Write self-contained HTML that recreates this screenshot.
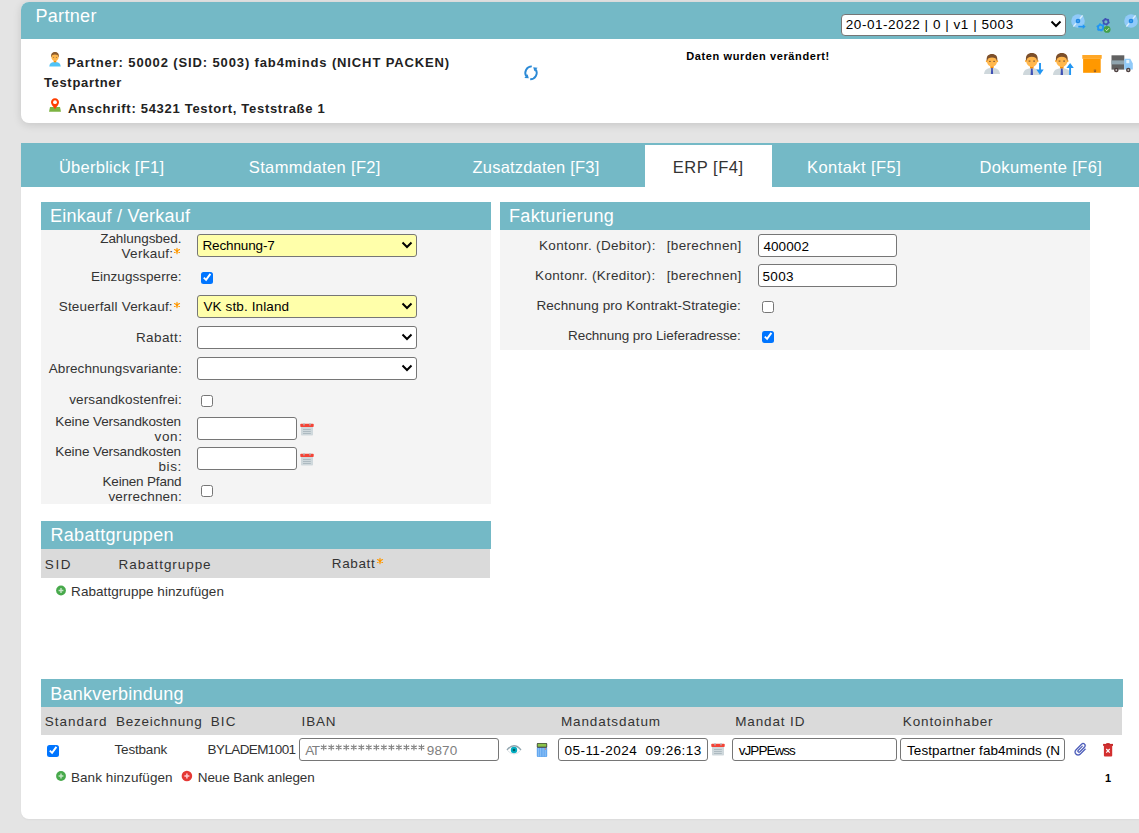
<!DOCTYPE html>
<html><head><meta charset="utf-8"><style>
html,body{margin:0;padding:0;}
body{width:1139px;height:833px;overflow:hidden;position:relative;background:#e4e4e4;font-family:"Liberation Sans", sans-serif;}
.a{position:absolute;box-sizing:border-box;}
.t{position:absolute;white-space:pre;line-height:normal;font-family:"Liberation Sans", sans-serif;}
.teal{background:#74b9c6;}
.sec{background:#f4f4f4;}
.gr{background:#dadada;}
.inp{position:absolute;box-sizing:border-box;background:#fff;border:1px solid #767676;border-radius:3px;}
.cb{position:absolute;box-sizing:border-box;width:12px;height:12px;border-radius:2.5px;}
.cb.off{border:1px solid #767676;background:#fff;}
.cb.on{background:#0075ff;}
</style></head><body>
<!-- Partner panel -->
<div class="a" style="left:21px;top:2px;width:1140px;height:121px;background:#fff;border-radius:8px;box-shadow:0 2px 9px rgba(0,0,0,0.13);overflow:hidden">
  <div class="a teal" style="left:0;top:0;width:1140px;height:37px"></div>
</div>
<!-- top select -->
<div class="inp" style="left:841px;top:14px;width:225px;height:22px;border-radius:4px"></div>

<!-- Tabs + content panel -->
<div class="a" style="left:21px;top:143px;width:1140px;height:676px;background:#fff;border-radius:0 0 8px 8px;box-shadow:0 1px 2px rgba(0,0,0,0.04)">
  <div class="a teal" style="left:0;top:0;width:1140px;height:44px"></div>
  <div class="a" style="left:624px;top:2px;width:127px;height:42px;background:#fff"></div>
</div>

<!-- Einkauf / Verkauf -->
<div class="a teal" style="left:41px;top:202px;width:450px;height:28px"></div>
<div class="a sec" style="left:41px;top:230px;width:450px;height:274px"></div>
<!-- Fakturierung -->
<div class="a teal" style="left:500px;top:202px;width:590px;height:28px"></div>
<div class="a sec" style="left:500px;top:230px;width:590px;height:120px"></div>
<!-- Rabattgruppen -->
<div class="a teal" style="left:41px;top:521px;width:450px;height:28px"></div>
<div class="a gr" style="left:41px;top:549px;width:449px;height:29px"></div>
<!-- Bankverbindung -->
<div class="a teal" style="left:41px;top:679px;width:1082px;height:28px"></div>
<div class="a gr" style="left:41px;top:707px;width:1081px;height:28px"></div>

<!-- Left form controls -->
<div class="inp" style="left:197px;top:234px;width:220px;height:23px;background:#ffffaa"></div>
<div class="cb on" style="left:201px;top:272px"><svg width="13" height="13" viewBox="0 0 13 13" style="position:absolute;left:-0.4px;top:-1px"><path d="M2.8 6.6 L5.1 8.9 L9.4 2.9" stroke="#fff" stroke-width="1.9" fill="none"/></svg></div>
<div class="inp" style="left:197px;top:295px;width:220px;height:23px;background:#ffffaa"></div>
<div class="inp" style="left:197px;top:326px;width:220px;height:23px"></div>
<div class="inp" style="left:197px;top:357px;width:220px;height:23px"></div>
<div class="cb off" style="left:201px;top:395px"></div>
<div class="inp" style="left:197px;top:417px;width:100px;height:23px"></div>
<div class="inp" style="left:197px;top:447px;width:100px;height:23px"></div>
<div class="cb off" style="left:201px;top:485px"></div>

<!-- Fakturierung controls -->
<div class="inp" style="left:758px;top:234px;width:139px;height:23px"></div>
<div class="inp" style="left:758px;top:264px;width:139px;height:23px"></div>
<div class="cb off" style="left:762px;top:301px"></div>
<div class="cb on" style="left:762px;top:331px"><svg width="13" height="13" viewBox="0 0 13 13" style="position:absolute;left:-0.4px;top:-1px"><path d="M2.8 6.6 L5.1 8.9 L9.4 2.9" stroke="#fff" stroke-width="1.9" fill="none"/></svg></div>

<!-- Bank row -->
<div class="cb on" style="left:47px;top:745px"><svg width="13" height="13" viewBox="0 0 13 13" style="position:absolute;left:-0.4px;top:-1px"><path d="M2.8 6.6 L5.1 8.9 L9.4 2.9" stroke="#fff" stroke-width="1.9" fill="none"/></svg></div>
<div class="inp" style="left:299px;top:738px;width:200px;height:23px"></div>
<div class="inp" style="left:558px;top:738px;width:150px;height:23px"></div>
<div class="inp" style="left:732px;top:738px;width:165px;height:23px"></div>
<div class="inp" style="left:900px;top:738px;width:165px;height:23px"></div>

<!-- header icons -->
<svg class="a" style="left:1064px;top:8px" width="75" height="30" viewBox="1064 8 75 30">
  <circle cx="1078" cy="21" r="6.8" fill="#90caf9"/>
  <path d="M1082.6 15.4 L1080 18.6 M1076 23.4 L1073.4 26.6" stroke="#dbeefc" stroke-width="1.5"/>
  <circle cx="1078" cy="21" r="2.3" fill="#1e88e5"/>
  <circle cx="1078" cy="21" r="0.8" fill="#64b5f6"/>
  <path d="M1078.3 26.6 H1083.3" stroke="#2196f3" stroke-width="1.6"/>
  <path d="M1082.8 24.2 L1085.6 26.6 L1082.8 29 Z" fill="#2196f3"/>
  <circle cx="1105.9" cy="21.8" r="2.4" fill="none" stroke="#3f51b5" stroke-width="1.6"/>
  <circle cx="1105.9" cy="21.8" r="3.2" fill="none" stroke="#3f51b5" stroke-width="1.3" stroke-dasharray="1.508 1.843"/>
  <circle cx="1100.6" cy="27.4" r="2.6" fill="none" stroke="#2196f3" stroke-width="1.8"/>
  <circle cx="1100.6" cy="27.4" r="3.5" fill="none" stroke="#2196f3" stroke-width="1.4" stroke-dasharray="1.649 2.016"/>
  <circle cx="1107.1" cy="29.4" r="3.4" fill="#43a047"/>
  <path d="M1105.4 29.5 L1106.7 30.7 L1109 28.2" stroke="#dcedc8" stroke-width="1" fill="none"/>
  <circle cx="1131" cy="21" r="6.8" fill="#90caf9"/>
  <path d="M1135.6 15.4 L1133 18.6 M1129 23.4 L1126.4 26.6" stroke="#dbeefc" stroke-width="1.5"/>
  <circle cx="1131" cy="21" r="2.3" fill="#1e88e5"/>
  <circle cx="1131" cy="21" r="0.8" fill="#64b5f6"/>
</svg>
<!-- top select chevron -->
<svg class="a" style="left:1050px;top:20px" width="12" height="8" viewBox="0 0 12 8"><path d="M1.5 1.5 L6 6 L10.5 1.5" stroke="#000" stroke-width="2" fill="none"/></svg>

<!-- partner small person -->
<svg class="a" style="left:44px;top:48px" width="20" height="22" viewBox="0 0 20 22">
<g transform="translate(5.24 4.00) scale(0.72)">
  <path d="M0 20 C0.3 15.8 3 13.9 8 13.9 C13 13.9 15.7 15.8 16 20 Z" fill="#4fc3f7"/>
  <rect x="6.2" y="10.5" width="3.6" height="3.8" fill="#fb8c00"/>
  <path d="M3 5.2 C3 1.7 5 1 8 1 C11 1 13 1.7 13 5.2 L13 7.7 C13 10.2 10.5 12.7 8 12.7 C5.5 12.7 3 10.2 3 7.7 Z" fill="#ffb74d"/>
  <path d="M2.7 6.8 C2.2 2 4.5 0 8 0 C11.5 0 13.8 2 13.3 6.8 L12.7 6.8 C12.5 4.6 11 3.5 8 3.5 C5 3.5 3.5 4.6 3.3 6.8 Z" fill="#8a5a2e"/>
  <rect x="5.1" y="6.9" width="1.6" height="1" fill="#8d6e47"/><rect x="9.3" y="6.9" width="1.6" height="1" fill="#8d6e47"/>
</g>
</svg>
<!-- map pin -->
<svg class="a" style="left:48px;top:97px" width="14" height="16" viewBox="48 97 14 16">
  <path d="M50 106.9 H60 L61 111.7 H49 Z" fill="#7cb342"/>
  <path d="M55 98.2 C57.4 98.2 59 100 59 102.2 C59 104.6 56.5 106.5 55 109.2 C53.5 106.5 51 104.6 51 102.2 C51 100 52.6 98.2 55 98.2 Z" fill="#ff3d00"/>
  <circle cx="55" cy="102.2" r="1.9" fill="#fff"/>
</svg>
<!-- sync -->
<svg class="a" style="left:520px;top:62px" width="22" height="22" viewBox="520 62 22 22">
  <path d="M531.8 66.4 A6.4 6.4 0 0 0 526.3 76.2" stroke="#2b8ad6" stroke-width="1.9" fill="none"/>
  <path d="M524.4 77.9 L528.8 78.3 L527.6 74.3 Z" fill="#2b8ad6"/>
  <path d="M530.2 79.3 A6.4 6.4 0 0 0 535.7 69.5" stroke="#2b8ad6" stroke-width="1.9" fill="none"/>
  <path d="M537.6 67.7 L533.2 67.3 L534.4 71.3 Z" fill="#2b8ad6"/>
</svg>

<!-- persons right -->
<svg class="a" style="left:982px;top:51.8px;overflow:visible" width="23" height="26" viewBox="0 0 23 26">
<g transform="translate(2 2) scale(1.0)">
  <path d="M0 20 C0.3 15.8 3 13.9 8 13.9 C13 13.9 15.7 15.8 16 20 Z" fill="#cfd8dc"/>
  <rect x="6.4" y="10.5" width="3.2" height="3.6" fill="#fb8c00"/>
  <circle cx="2.8" cy="7.3" r="1" fill="#ffa726"/><circle cx="13.2" cy="7.3" r="1" fill="#ffa726"/>
  <path d="M3 5.2 C3 1.7 5 1 8 1 C11 1 13 1.7 13 5.2 L13 7.7 C13 10.2 10.5 12.7 8 12.7 C5.5 12.7 3 10.2 3 7.7 Z" fill="#ffb74d"/>
  <path d="M2.7 6.8 C2.2 2 4.5 0 8 0 C11.5 0 13.8 2 13.3 6.8 L12.7 6.8 C12.5 4.6 11 3.5 8 3.5 C5 3.5 3.5 4.6 3.3 6.8 Z" fill="#7b4f2c"/>
  <rect x="5.1" y="6.9" width="1.6" height="0.9" fill="#6d4c2f"/><rect x="9.3" y="6.9" width="1.6" height="0.9" fill="#6d4c2f"/>
  <path d="M7.2 14 H8.8 L9.1 20 H6.9 Z" fill="#3f51b5"/>
</g>
</svg>
<svg class="a" style="left:1021.1000000000001px;top:50.9px;overflow:visible" width="24" height="28" viewBox="0 0 24 28">
<g transform="translate(2 2) scale(1.1)">
  <path d="M0 20 C0.3 15.8 3 13.9 8 13.9 C13 13.9 15.7 15.8 16 20 Z" fill="#cfd8dc"/>
  <rect x="6.4" y="10.5" width="3.2" height="3.6" fill="#fb8c00"/>
  <circle cx="2.8" cy="7.3" r="1" fill="#ffa726"/><circle cx="13.2" cy="7.3" r="1" fill="#ffa726"/>
  <path d="M3 5.2 C3 1.7 5 1 8 1 C11 1 13 1.7 13 5.2 L13 7.7 C13 10.2 10.5 12.7 8 12.7 C5.5 12.7 3 10.2 3 7.7 Z" fill="#ffb74d"/>
  <path d="M2.7 6.8 C2.2 2 4.5 0 8 0 C11.5 0 13.8 2 13.3 6.8 L12.7 6.8 C12.5 4.6 11 3.5 8 3.5 C5 3.5 3.5 4.6 3.3 6.8 Z" fill="#7b4f2c"/>
  <rect x="5.1" y="6.9" width="1.6" height="0.9" fill="#6d4c2f"/><rect x="9.3" y="6.9" width="1.6" height="0.9" fill="#6d4c2f"/>
  <path d="M7.2 14 H8.8 L9.1 20 H6.9 Z" fill="#3f51b5"/>
</g><path transform="translate(-1021.1000000000001 -50.9)" d="M1039.15 62.8 h1.9 v6.7 h2.75 l-3.7 5.2 l-3.7 -5.2 h2.75z" fill="#2196f3"/>
</svg>
<svg class="a" style="left:1051.1000000000001px;top:50.9px;overflow:visible" width="24" height="28" viewBox="0 0 24 28">
<g transform="translate(2 2) scale(1.1)">
  <path d="M0 20 C0.3 15.8 3 13.9 8 13.9 C13 13.9 15.7 15.8 16 20 Z" fill="#cfd8dc"/>
  <rect x="6.4" y="10.5" width="3.2" height="3.6" fill="#fb8c00"/>
  <circle cx="2.8" cy="7.3" r="1" fill="#ffa726"/><circle cx="13.2" cy="7.3" r="1" fill="#ffa726"/>
  <path d="M3 5.2 C3 1.7 5 1 8 1 C11 1 13 1.7 13 5.2 L13 7.7 C13 10.2 10.5 12.7 8 12.7 C5.5 12.7 3 10.2 3 7.7 Z" fill="#ffb74d"/>
  <path d="M2.7 6.8 C2.2 2 4.5 0 8 0 C11.5 0 13.8 2 13.3 6.8 L12.7 6.8 C12.5 4.6 11 3.5 8 3.5 C5 3.5 3.5 4.6 3.3 6.8 Z" fill="#7b4f2c"/>
  <rect x="5.1" y="6.9" width="1.6" height="0.9" fill="#6d4c2f"/><rect x="9.3" y="6.9" width="1.6" height="0.9" fill="#6d4c2f"/>
  <path d="M7.2 14 H8.8 L9.1 20 H6.9 Z" fill="#3f51b5"/>
</g><path transform="translate(-1051.1000000000001 -50.9)" d="M1069.25 75 h1.9 v-7.2 h2.75 l-3.7 -5 l-3.7 5 h2.75z" fill="#2196f3"/>
</svg>
<!-- box -->
<svg class="a" style="left:1081px;top:54px" width="22" height="20" viewBox="1081 54 22 20">
  <rect x="1083.1" y="58.5" width="17.6" height="14.3" fill="#ff9800"/>
  <rect x="1082.3" y="55" width="19.4" height="3.8" fill="#ffa726"/>
  <path d="M1094.3 69.5 v2 M1095.6 69.5 v2 M1094 71.6 h2" stroke="#5d4037" stroke-width="0.6"/>
</svg>
<!-- truck -->
<svg class="a" style="left:1110px;top:54px" width="25" height="20" viewBox="1110 54 25 20">
  <rect x="1111.5" y="55.3" width="12.8" height="14.3" fill="#616161"/>
  <rect x="1111.5" y="60.4" width="12.8" height="4" fill="#90a4ae"/>
  <path d="M1124.3 58.8 H1130.3 L1132.8 63.5 V69.6 H1124.3 Z" fill="#90caf9"/>
  <rect x="1126.3" y="60" width="3" height="3.2" fill="#e3f2fd"/>
  <circle cx="1116.3" cy="70" r="2.3" fill="#4e4040"/>
  <circle cx="1116.3" cy="70" r="0.9" fill="#bdbdbd"/>
  <circle cx="1128.3" cy="70" r="2.3" fill="#4e4040"/>
  <circle cx="1128.3" cy="70" r="0.9" fill="#bdbdbd"/>
</svg>

<!-- select chevrons -->
<svg class="a" style="left:401px;top:241px" width="12" height="8" viewBox="0 0 12 8"><path d="M1.5 1.5 L6 6 L10.5 1.5" stroke="#000" stroke-width="2" fill="none"/></svg>
<svg class="a" style="left:401px;top:302px" width="12" height="8" viewBox="0 0 12 8"><path d="M1.5 1.5 L6 6 L10.5 1.5" stroke="#000" stroke-width="2" fill="none"/></svg>
<svg class="a" style="left:401px;top:333px" width="12" height="8" viewBox="0 0 12 8"><path d="M1.5 1.5 L6 6 L10.5 1.5" stroke="#000" stroke-width="2" fill="none"/></svg>
<svg class="a" style="left:401px;top:364px" width="12" height="8" viewBox="0 0 12 8"><path d="M1.5 1.5 L6 6 L10.5 1.5" stroke="#000" stroke-width="2" fill="none"/></svg>

<!-- calendars -->
<svg class="a" style="left:300px;top:422px" width="15" height="15" viewBox="0 0 15 15">
  <rect x="1" y="4.5" width="12" height="9" rx="0.8" fill="#cfd8dc"/>
  <rect x="0.3" y="1.8" width="13.4" height="3.3" rx="0.8" fill="#f44336"/>
  <path d="M3 7.5 h7.8 M3 9.5 h7.8 M3 11.5 h7.8" stroke="#a4b3ba" stroke-width="0.8"/>
  <path d="M4 1 v2.5 M10 1 v2.5" stroke="#b0bec5" stroke-width="1.2"/>
</svg>
<svg class="a" style="left:300px;top:452px" width="15" height="15" viewBox="0 0 15 15">
  <rect x="1" y="4.5" width="12" height="9" rx="0.8" fill="#cfd8dc"/>
  <rect x="0.3" y="1.8" width="13.4" height="3.3" rx="0.8" fill="#f44336"/>
  <path d="M3 7.5 h7.8 M3 9.5 h7.8 M3 11.5 h7.8" stroke="#a4b3ba" stroke-width="0.8"/>
  <path d="M4 1 v2.5 M10 1 v2.5" stroke="#b0bec5" stroke-width="1.2"/>
</svg>
<svg class="a" style="left:711px;top:742px" width="15" height="15" viewBox="0 0 15 15">
  <rect x="1" y="4.5" width="12" height="9" rx="0.8" fill="#cfd8dc"/>
  <rect x="0.3" y="1.8" width="13.4" height="3.3" rx="0.8" fill="#f44336"/>
  <path d="M3 7.5 h7.8 M3 9.5 h7.8 M3 11.5 h7.8" stroke="#a4b3ba" stroke-width="0.8"/>
  <path d="M4 1 v2.5 M10 1 v2.5" stroke="#b0bec5" stroke-width="1.2"/>
</svg>

<!-- plus circles -->
<svg class="a" style="left:54px;top:583px" width="14" height="14" viewBox="0 0 14 14">
  <circle cx="7" cy="7.5" r="4.9" fill="#47a94b"/>
  <path d="M4.6 7.5 h4.8 M7 5.1 v4.8" stroke="#c8e6c9" stroke-width="1.4"/>
</svg>
<svg class="a" style="left:54px;top:769px" width="14" height="14" viewBox="0 0 14 14">
  <circle cx="7" cy="7" r="4.9" fill="#47a94b"/>
  <path d="M4.6 7 h4.8 M7 4.6 v4.8" stroke="#c8e6c9" stroke-width="1.4"/>
</svg>
<svg class="a" style="left:180px;top:769px" width="14" height="14" viewBox="0 0 14 14">
  <circle cx="6.9" cy="7" r="5.3" fill="#e53935"/>
  <path d="M4.4 7 h5 M6.9 4.5 v5" stroke="#ffcdd2" stroke-width="1.5"/>
</svg>

<!-- eye -->
<svg class="a" style="left:505px;top:742px" width="18" height="15" viewBox="505 742 18 15">
  <path d="M507 750 Q514 741.5 521 750" stroke="#90a4ae" stroke-width="1.3" fill="none"/>
  <path d="M507.5 750.5 Q514 757.5 520.5 750.5" stroke="#cfd8dc" stroke-width="0.8" fill="none"/>
  <circle cx="514" cy="750" r="3.2" fill="#00acc1"/>
  <circle cx="514" cy="750" r="1.3" fill="#006064"/>
</svg>
<!-- calculator -->
<svg class="a" style="left:536px;top:742px" width="13" height="16" viewBox="536 742 13 16">
  <rect x="536.8" y="747" width="10.4" height="9.9" rx="1" fill="#64a8f0"/>
  <rect x="536.8" y="742.9" width="10.4" height="4.8" rx="1" fill="#424242"/>
  <rect x="537.6" y="743.7" width="8.8" height="3" fill="#8bc34a"/>
  <path d="M538.6 748 v8.5 M540.6 748 v8.5 M543.1 748 v8.5 M545.3 748 v8.5" stroke="#a8d0f8" stroke-width="0.6"/>
  <rect x="545" y="748.2" width="0.8" height="1.8" fill="#e57373"/>
</svg>
<!-- paperclip -->
<svg class="a" style="left:1070px;top:739px" width="21" height="21" viewBox="0 0 21 21">
  <g transform="translate(10.6 10.5) rotate(45) scale(0.64) translate(-12.5 -12)">
  <path d="M16.5 6v11.5c0 2.21-1.79 4-4 4s-4-1.79-4-4V5c0-1.38 1.12-2.5 2.5-2.5s2.5 1.12 2.5 2.5v10.5c0 .55-.45 1-1 1s-1-.45-1-1V6H10v9.5c0 1.38 1.12 2.5 2.5 2.5s2.5-1.12 2.5-2.5V5c0-2.21-1.79-4-4-4S7 2.79 7 5v12.5c0 3.04 2.46 5.5 5.5 5.5s5.5-2.46 5.5-5.5V6h-1.5z" fill="#3f51b5" stroke="#3f51b5" stroke-width="0.5"/>
  </g>
</svg>
<!-- trash -->
<svg class="a" style="left:1102px;top:742px" width="13" height="16" viewBox="1102 742 13 16">
  <path d="M1103.9 745.6 H1112.2 V755.4 Q1112.2 756.4 1111.2 756.4 H1104.9 Q1103.9 756.4 1103.9 755.4 Z" fill="#d32f2f"/>
  <rect x="1103.1" y="743.9" width="9.9" height="2" fill="#c62828"/>
  <rect x="1106.3" y="743.1" width="3.4" height="1.2" fill="#c62828"/>
  <path d="M1106.3 749 L1109.7 752.6 M1109.7 749 L1106.3 752.6" stroke="#fff" stroke-width="1.2"/>
</svg>
<!-- asterisks -->
<svg class="a" style="left:170px;top:244px" width="14" height="14" viewBox="-7 -7 14 14"><g stroke="#ff9800" stroke-width="1.15" stroke-linecap="round"><path d="M0 -2.7 V2.7 M-2.5 -1.4 L2.5 1.4 M-2.5 1.4 L2.5 -1.4"/></g><circle r="1.25" fill="#ff9800"/></svg>
<svg class="a" style="left:170px;top:298px" width="14" height="14" viewBox="-7 -7 14 14"><g stroke="#ff9800" stroke-width="1.15" stroke-linecap="round"><path d="M0 -2.7 V2.7 M-2.5 -1.4 L2.5 1.4 M-2.5 1.4 L2.5 -1.4"/></g><circle r="1.25" fill="#ff9800"/></svg>
<svg class="a" style="left:373px;top:554px" width="14" height="14" viewBox="-7 -7 14 14"><g stroke="#ff9800" stroke-width="1.15" stroke-linecap="round"><path d="M0 -2.7 V2.7 M-2.5 -1.4 L2.5 1.4 M-2.5 1.4 L2.5 -1.4"/></g><circle r="1.25" fill="#ff9800"/></svg>
<!-- iban stars -->
<svg class="a" style="left:318px;top:742px" width="112" height="12" viewBox="318 742 112 12"><g stroke="#7a7a7a" stroke-width="1.05" stroke-linecap="round"><path d="M323.70 744.80 V750.00 M321.20 746.00 L326.20 748.80 M321.20 748.80 L326.20 746.00"/><path d="M331.22 744.80 V750.00 M328.72 746.00 L333.72 748.80 M328.72 748.80 L333.72 746.00"/><path d="M338.74 744.80 V750.00 M336.24 746.00 L341.24 748.80 M336.24 748.80 L341.24 746.00"/><path d="M346.26 744.80 V750.00 M343.76 746.00 L348.76 748.80 M343.76 748.80 L348.76 746.00"/><path d="M353.78 744.80 V750.00 M351.28 746.00 L356.28 748.80 M351.28 748.80 L356.28 746.00"/><path d="M361.30 744.80 V750.00 M358.80 746.00 L363.80 748.80 M358.80 748.80 L363.80 746.00"/><path d="M368.82 744.80 V750.00 M366.32 746.00 L371.32 748.80 M366.32 748.80 L371.32 746.00"/><path d="M376.34 744.80 V750.00 M373.84 746.00 L378.84 748.80 M373.84 748.80 L378.84 746.00"/><path d="M383.86 744.80 V750.00 M381.36 746.00 L386.36 748.80 M381.36 748.80 L386.36 746.00"/><path d="M391.38 744.80 V750.00 M388.88 746.00 L393.88 748.80 M388.88 748.80 L393.88 746.00"/><path d="M398.90 744.80 V750.00 M396.40 746.00 L401.40 748.80 M396.40 748.80 L401.40 746.00"/><path d="M406.42 744.80 V750.00 M403.92 746.00 L408.92 748.80 M403.92 748.80 L408.92 746.00"/><path d="M413.94 744.80 V750.00 M411.44 746.00 L416.44 748.80 M411.44 748.80 L416.44 746.00"/><path d="M421.46 744.80 V750.00 M418.96 746.00 L423.96 748.80 M418.96 748.80 L423.96 746.00"/></g></svg>

<div class="t" style="left:35.40px;top:6.00px;font-size:18px;font-weight:normal;color:#ffffff;letter-spacing:0.333px;">Partner</div><div class="t" style="left:845.80px;top:17.00px;font-size:13.5px;font-weight:normal;color:#000;letter-spacing:0.540px;">20-01-2022 | 0 | v1 | 5003</div><div class="t" style="left:67.00px;top:55.00px;font-size:13px;font-weight:bold;color:#222;letter-spacing:0.872px;">Partner: 50002 (SID: 5003) fab4minds (NICHT PACKEN)</div><div class="t" style="left:43.90px;top:75.00px;font-size:13px;font-weight:bold;color:#222;letter-spacing:0.680px;">Testpartner</div><div class="t" style="left:68.00px;top:100.60px;font-size:13px;font-weight:bold;color:#222;letter-spacing:0.703px;">Anschrift: 54321 Testort, Teststraße 1</div><div class="t" style="left:686.30px;top:50.40px;font-size:11px;font-weight:bold;color:#000;letter-spacing:0.609px;">Daten wurden verändert!</div><div class="t" style="left:58.90px;top:158.00px;font-size:16.5px;font-weight:normal;color:#fff;letter-spacing:0.262px;">Überblick [F1]</div><div class="t" style="left:248.80px;top:158.00px;font-size:16.5px;font-weight:normal;color:#fff;letter-spacing:0.364px;">Stammdaten [F2]</div><div class="t" style="left:472.60px;top:158.00px;font-size:16.5px;font-weight:normal;color:#fff;letter-spacing:0.187px;">Zusatzdaten [F3]</div><div class="t" style="left:672.70px;top:158.00px;font-size:16.5px;font-weight:normal;color:#333;letter-spacing:0.543px;">ERP [F4]</div><div class="t" style="left:807.00px;top:158.00px;font-size:16.5px;font-weight:normal;color:#fff;letter-spacing:0.436px;">Kontakt [F5]</div><div class="t" style="left:979.40px;top:158.00px;font-size:16.5px;font-weight:normal;color:#fff;letter-spacing:0.385px;">Dokumente [F6]</div><div class="t" style="left:50.00px;top:206.10px;font-size:18px;font-weight:normal;color:#fff;letter-spacing:0.238px;">Einkauf / Verkauf</div><div class="t" style="left:509.00px;top:206.00px;font-size:18px;font-weight:normal;color:#fff;letter-spacing:0.336px;">Fakturierung</div><div class="t" style="left:50.40px;top:525.00px;font-size:18px;font-weight:normal;color:#fff;letter-spacing:0.342px;">Rabattgruppen</div><div class="t" style="left:50.30px;top:683.50px;font-size:18px;font-weight:normal;color:#fff;letter-spacing:0.246px;">Bankverbindung</div><div class="t" style="left:100.20px;top:230.70px;font-size:13.5px;font-weight:normal;color:#333333;letter-spacing:-0.045px;">Zahlungsbed.</div><div class="t" style="left:121.60px;top:245.60px;font-size:13.5px;font-weight:normal;color:#333333;letter-spacing:0.257px;">Verkauf:</div><div class="t" style="left:90.90px;top:269.00px;font-size:13.5px;font-weight:normal;color:#333333;letter-spacing:0.046px;">Einzugssperre:</div><div class="t" style="left:58.70px;top:299.10px;font-size:13.5px;font-weight:normal;color:#333333;letter-spacing:0.200px;">Steuerfall Verkauf:</div><div class="t" style="left:135.90px;top:329.70px;font-size:13.5px;font-weight:normal;color:#333333;letter-spacing:0.417px;">Rabatt:</div><div class="t" style="left:48.70px;top:361.00px;font-size:13.5px;font-weight:normal;color:#333333;letter-spacing:0.089px;">Abrechnungsvariante:</div><div class="t" style="left:69.20px;top:392.00px;font-size:13.5px;font-weight:normal;color:#333333;letter-spacing:0.129px;">versandkostenfrei:</div><div class="t" style="left:55.30px;top:414.30px;font-size:13.5px;font-weight:normal;color:#333333;letter-spacing:-0.100px;">Keine Versandkosten</div><div class="t" style="left:154.60px;top:428.80px;font-size:13.5px;font-weight:normal;color:#333333;letter-spacing:0.633px;">von:</div><div class="t" style="left:55.30px;top:444.10px;font-size:13.5px;font-weight:normal;color:#333333;letter-spacing:-0.100px;">Keine Versandkosten</div><div class="t" style="left:158.50px;top:458.70px;font-size:13.5px;font-weight:normal;color:#333333;letter-spacing:0.600px;">bis:</div><div class="t" style="left:102.50px;top:474.40px;font-size:13.5px;font-weight:normal;color:#333333;letter-spacing:-0.182px;">Keinen Pfand</div><div class="t" style="left:108.40px;top:488.90px;font-size:13.5px;font-weight:normal;color:#333333;letter-spacing:0.210px;">verrechnen:</div><div class="t" style="left:202.50px;top:237.80px;font-size:13.5px;font-weight:normal;color:#000;letter-spacing:-0.133px;">Rechnung-7</div><div class="t" style="left:203.50px;top:299.10px;font-size:13.5px;font-weight:normal;color:#000;letter-spacing:0.115px;">VK stb. Inland</div><div class="t" style="left:539.00px;top:238.00px;font-size:13.5px;font-weight:normal;color:#333333;letter-spacing:0.339px;">Kontonr. (Debitor):</div><div class="t" style="left:666.80px;top:238.00px;font-size:13.5px;font-weight:normal;color:#333333;letter-spacing:0.320px;">[berechnen]</div><div class="t" style="left:535.10px;top:267.80px;font-size:13.5px;font-weight:normal;color:#333333;letter-spacing:0.316px;">Kontonr. (Kreditor):</div><div class="t" style="left:666.80px;top:267.80px;font-size:13.5px;font-weight:normal;color:#333333;letter-spacing:0.320px;">[berechnen]</div><div class="t" style="left:536.40px;top:298.10px;font-size:13.5px;font-weight:normal;color:#333333;letter-spacing:0.106px;">Rechnung pro Kontrakt-Strategie:</div><div class="t" style="left:568.00px;top:327.90px;font-size:13.5px;font-weight:normal;color:#333333;letter-spacing:-0.050px;">Rechnung pro Lieferadresse:</div><div class="t" style="left:763.40px;top:239.00px;font-size:13.5px;font-weight:normal;color:#000;letter-spacing:0.100px;">400002</div><div class="t" style="left:762.40px;top:269.00px;font-size:13.5px;font-weight:normal;color:#000;letter-spacing:0.400px;">5003</div><div class="t" style="left:44.80px;top:557.30px;font-size:13.5px;font-weight:normal;color:#333333;letter-spacing:1.650px;">SID</div><div class="t" style="left:118.60px;top:557.30px;font-size:13.5px;font-weight:normal;color:#333333;letter-spacing:0.927px;">Rabattgruppe</div><div class="t" style="left:331.80px;top:556.00px;font-size:13.5px;font-weight:normal;color:#333333;letter-spacing:0.620px;">Rabatt</div><div class="t" style="left:71.10px;top:583.70px;font-size:13.5px;font-weight:normal;color:#333333;letter-spacing:0.055px;">Rabattgruppe hinzufügen</div><div class="t" style="left:44.80px;top:714.30px;font-size:13.5px;font-weight:normal;color:#333333;letter-spacing:1.000px;">Standard</div><div class="t" style="left:115.90px;top:714.30px;font-size:13.5px;font-weight:normal;color:#333333;letter-spacing:0.780px;">Bezeichnung</div><div class="t" style="left:210.70px;top:714.30px;font-size:13.5px;font-weight:normal;color:#333333;letter-spacing:1.100px;">BIC</div><div class="t" style="left:301.60px;top:714.30px;font-size:13.5px;font-weight:normal;color:#333333;letter-spacing:0.800px;">IBAN</div><div class="t" style="left:560.90px;top:714.30px;font-size:13.5px;font-weight:normal;color:#333333;letter-spacing:0.900px;">Mandatsdatum</div><div class="t" style="left:735.20px;top:714.30px;font-size:13.5px;font-weight:normal;color:#333333;letter-spacing:0.875px;">Mandat ID</div><div class="t" style="left:902.80px;top:714.30px;font-size:13.5px;font-weight:normal;color:#333333;letter-spacing:0.864px;">Kontoinhaber</div><div class="t" style="left:114.50px;top:742.20px;font-size:13.5px;font-weight:normal;color:#333333;letter-spacing:-0.186px;">Testbank</div><div class="t" style="left:207.60px;top:742.20px;font-size:13.5px;font-weight:normal;color:#333333;letter-spacing:-0.610px;">BYLADEM1001</div><div class="t" style="left:305.30px;top:742.70px;font-size:13.5px;font-weight:normal;color:#808080;letter-spacing:-1.600px;">AT</div><div class="t" style="left:426.80px;top:742.70px;font-size:13.5px;font-weight:normal;color:#808080;letter-spacing:0.133px;">9870</div><div class="t" style="left:564.50px;top:743.30px;font-size:13.5px;font-weight:normal;color:#000;letter-spacing:0.458px;">05-11-2024  09:26:13</div><div class="t" style="left:738.80px;top:743.30px;font-size:13.5px;font-weight:normal;color:#000;letter-spacing:-0.971px;">vJPPEwss</div><div class="t" style="left:907.00px;top:742.60px;font-size:13.5px;font-weight:normal;color:#000;letter-spacing:0.065px;">Testpartner fab4minds (N</div><div class="t" style="left:70.90px;top:769.70px;font-size:13.5px;font-weight:normal;color:#333333;letter-spacing:0.079px;">Bank hinzufügen</div><div class="t" style="left:197.80px;top:769.70px;font-size:13.5px;font-weight:normal;color:#333333;letter-spacing:-0.100px;">Neue Bank anlegen</div><div class="t" style="left:1104.90px;top:772.00px;font-size:11px;font-weight:bold;color:#000;letter-spacing:0.000px;">1</div>
</body></html>
